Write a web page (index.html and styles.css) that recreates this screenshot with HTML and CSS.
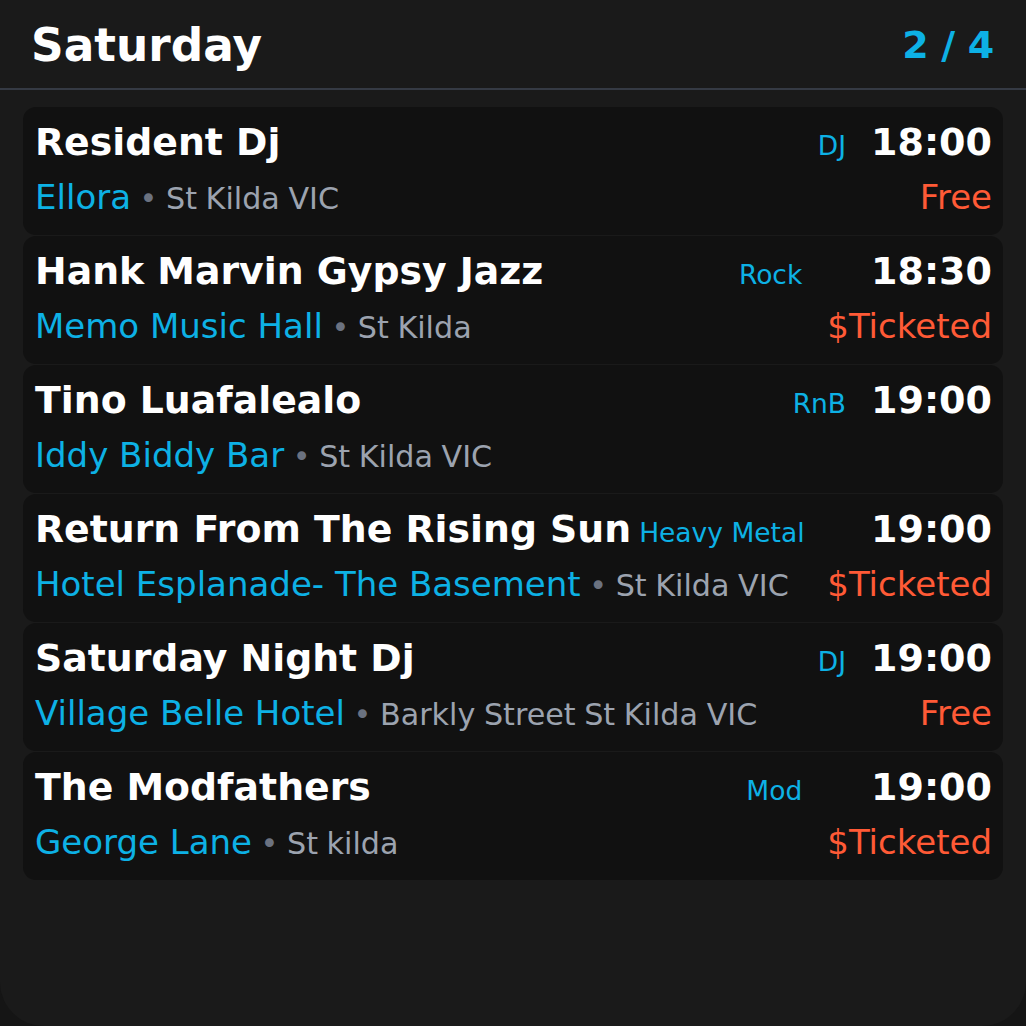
FILE: index.html
```html
<!DOCTYPE html>
<html>
<head>
<meta charset="utf-8">
<link rel="stylesheet" href="styles.css">
</head>
<body>
<div class="screen">
  <header class="header">
    <h1 class="day">Saturday</h1>
    <div class="page">2 / 4</div>
  </header>
  <div class="list">
    <div class="card">
      <div class="top"><span class="title">Resident Dj</span><span class="tag">DJ</span></div>
      <div class="time">18:00</div>
      <div class="where"><span class="venue">Ellora</span><span class="loc"> <span class="dot">•</span> St Kilda VIC</span></div>
      <div class="price">Free</div>
    </div>
    <div class="card">
      <div class="top"><span class="title">Hank Marvin Gypsy Jazz</span><span class="tag">Rock</span></div>
      <div class="time">18:30</div>
      <div class="where"><span class="venue">Memo Music Hall</span><span class="loc"> <span class="dot">•</span> St Kilda</span></div>
      <div class="price">$Ticketed</div>
    </div>
    <div class="card">
      <div class="top"><span class="title">Tino Luafalealo</span><span class="tag">RnB</span></div>
      <div class="time">19:00</div>
      <div class="where"><span class="venue">Iddy Biddy Bar</span><span class="loc"> <span class="dot">•</span> St Kilda VIC</span></div>
      <div class="price"></div>
    </div>
    <div class="card">
      <div class="top"><span class="title">Return From The Rising Sun</span><span class="tag">Heavy Metal</span></div>
      <div class="time">19:00</div>
      <div class="where"><span class="venue">Hotel Esplanade- The Basement</span><span class="loc"> <span class="dot">•</span> St Kilda VIC</span></div>
      <div class="price">$Ticketed</div>
    </div>
    <div class="card">
      <div class="top"><span class="title">Saturday Night Dj</span><span class="tag">DJ</span></div>
      <div class="time">19:00</div>
      <div class="where"><span class="venue">Village Belle Hotel</span><span class="loc"> <span class="dot">•</span> Barkly Street St Kilda VIC</span></div>
      <div class="price">Free</div>
    </div>
    <div class="card">
      <div class="top"><span class="title">The Modfathers</span><span class="tag">Mod</span></div>
      <div class="time">19:00</div>
      <div class="where"><span class="venue">George Lane</span><span class="loc"> <span class="dot">•</span> St kilda</span></div>
      <div class="price">$Ticketed</div>
    </div>
  </div>
</div>
</body>
</html>
```

FILE: styles.css
```css
html, body {
  margin: 0;
  padding: 0;
  background: #151515;
}
body {
  font-family: "DejaVu Sans", sans-serif;
  color: #fff;
}
.screen {
  width: 1026px;
  height: 1026px;
  box-sizing: border-box;
  background: #1a1a1a;
  border-radius: 0 0 44px 44px;
  overflow: hidden;
}
.header {
  height: 88px;
  display: flex;
  align-items: center;
  justify-content: space-between;
  padding: 0 32px 0 31px;
  border-bottom: 2px solid #353a44;
}
.day {
  margin: 0;
  font-size: 45.4px;
  font-weight: bold;
  color: #fff;
  line-height: 1;
  padding-top: 4px;
}
.page {
  font-size: 38px;
  font-weight: bold;
  color: #0db1e5;
  line-height: 1;
  letter-spacing: -0.3px;
  padding-top: 2px;
}
.list {
  padding: 17px 23px 0 23px;
  display: flex;
  flex-direction: column;
  gap: 1px;
}
.card {
  height: 128px;
  box-sizing: border-box;
  background: #111111;
  border-radius: 13px;
  padding: 13px 11px 0 12px;
  display: grid;
  grid-template-columns: 1fr auto;
  grid-template-rows: auto auto;
  align-content: start;
  column-gap: 25px;
  row-gap: 13px;
  line-height: normal;
}
.top {
  display: flex;
  align-items: baseline;
  gap: 8px;
  min-width: 0;
  font-size: 38px;
}
.title {
  font-size: 37.8px;
  font-weight: bold;
  white-space: nowrap;
}
.tag {
  margin-left: auto;
  font-size: 26.5px;
  color: #0db1e5;
  white-space: nowrap;
}
.time {
  font-size: 38px;
  font-weight: bold;
  text-align: right;
  justify-self: end;
}
.where {
  white-space: nowrap;
  font-size: 34px;
}
.venue {
  font-size: 34px;
  color: #0db1e5;
}
.loc {
  font-size: 30.2px;
  color: #9ca3af;
  word-spacing: -1px;
}
.dot {
  color: #6b7280;
}
.price {
  font-size: 34px;
  color: #ff5a36;
  text-align: right;
  justify-self: end;
}
```
